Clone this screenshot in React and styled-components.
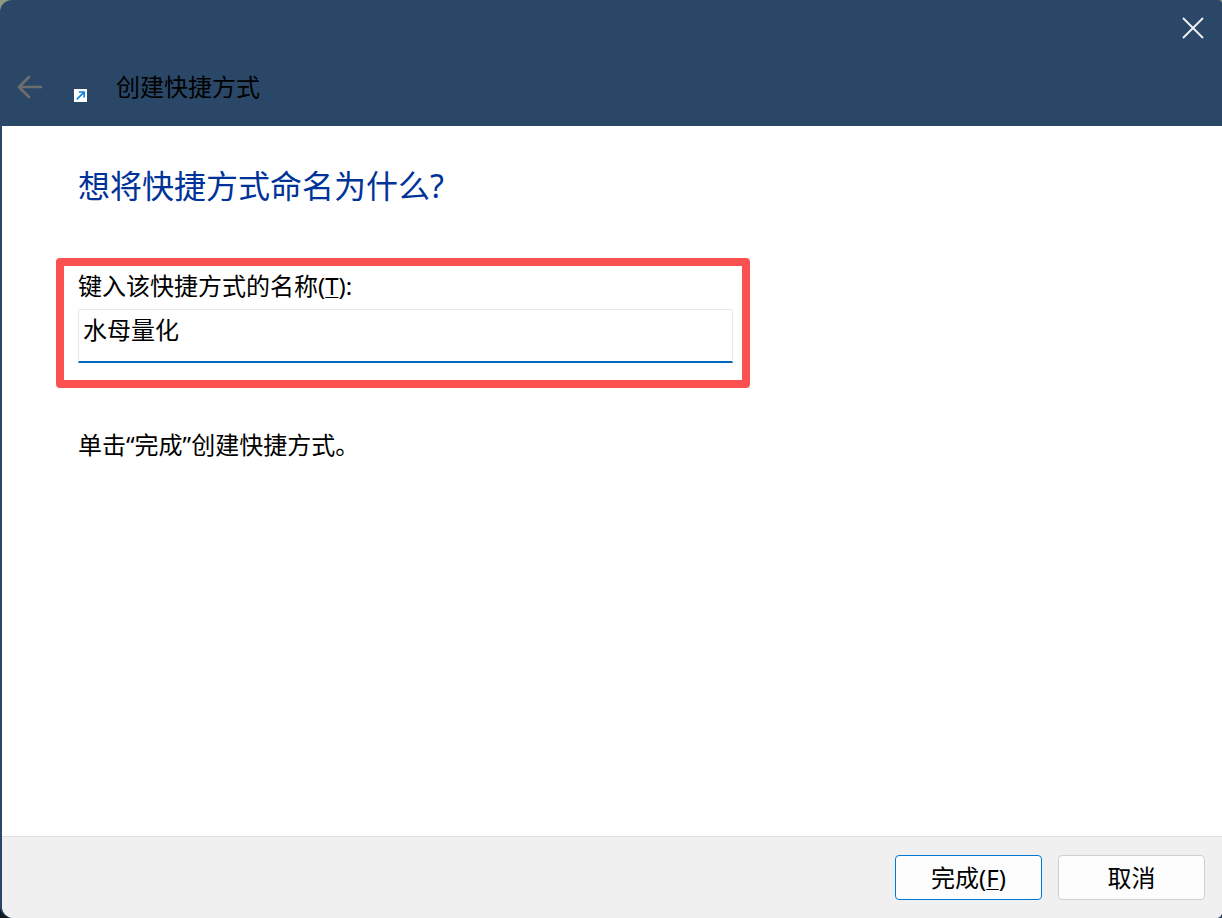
import React, { useState } from 'react';
import styled, { createGlobalStyle } from 'styled-components';

const App = () => {
  const [name, setName] = useState('水母量化');

  return (
    <>
      <GlobalStyle />
      <Desktop>
        <Wizard>
          <Header>
            <CloseButton type="button" aria-label="关闭">
              <svg width="22" height="22" viewBox="0 0 22 22" fill="none">
                <path d="M1 1 21 21M21 1 1 21" stroke="#f4f4f4" strokeWidth="1.8" />
              </svg>
            </CloseButton>
            <TitleRow>
              <BackButton type="button" aria-label="上一步" disabled>
                <svg width="26" height="24" viewBox="0 0 26 24" fill="none">
                  <path
                    d="M13 2 3 12l10 10M3 12h22"
                    stroke="#6d6d6d"
                    strokeWidth="2.7"
                    strokeLinecap="round"
                    strokeLinejoin="round"
                  />
                </svg>
              </BackButton>
              <ShortcutIcon viewBox="0 0 13 13">
                <rect width="13" height="13" fill="#fff" />
                <path
                  d="M2.8 10.4 10 3.2M4.8 3h5.400v5.400"
                  fill="none"
                  stroke="#1583d8"
                  strokeWidth="1.7"
                />
              </ShortcutIcon>
              <Title>创建快捷方式</Title>
            </TitleRow>
          </Header>
          <Panel>
            <Content>
              <Heading>想将快捷方式命名为什么?</Heading>
              <Highlight>
                <Label htmlFor="shortcut-name">
                  键入该快捷方式的名称(<u>T</u>):
                </Label>
                <NameInput
                  id="shortcut-name"
                  type="text"
                  accessKey="t"
                  value={name}
                  onChange={e => setName(e.target.value)}
                />
              </Highlight>
              <Hint>单击“完成”创建快捷方式。</Hint>
            </Content>
            <Footer>
              <Button type="button" accessKey="f" $primary>
                完成(<u>F</u>)
              </Button>
              <Button type="button">取消</Button>
            </Footer>
          </Panel>
        </Wizard>
      </Desktop>
    </>
  );
};

export default App;

const GlobalStyle = createGlobalStyle`
  * {
    box-sizing: border-box;
  }
  body {
    margin: 0;
  }
  body, button, input {
    font-family: 'Noto Sans', 'Noto Sans CJK SC', sans-serif;
    font-size: 24px;
    line-height: 32px;
    color: #000;
  }
  u {
    text-decoration-thickness: 1px;
    text-underline-offset: 2px;
  }
`;

const Desktop = styled.div`
  display: flex;
  min-height: 100vh;
  background: linear-gradient(#8f9a7c 50%, #14181c 50%);
`;

const Wizard = styled.main`
  flex: 1;
  display: flex;
  flex-direction: column;
  padding-left: 2px;
  border-radius: 12px 4px 0 12px;
  background-color: #2a4767;
`;

const Header = styled.header`
  display: flex;
  flex-direction: column;
  height: 126px;
`;

const CloseButton = styled.button`
  display: flex;
  align-items: center;
  justify-content: center;
  align-self: flex-end;
  width: 58px;
  height: 56px;
  padding: 0;
  border: 0;
  background: none;
`;

const TitleRow = styled.div`
  display: flex;
  align-items: center;
  height: 62px;
  padding-left: 14px;
`;

const BackButton = styled.button`
  display: flex;
  padding: 0;
  border: 0;
  background: none;
`;

const ShortcutIcon = styled.svg`
  width: 13px;
  height: 13px;
  margin: 16px 29px 0 32px;
`;

const Title = styled.h1`
  margin: 0;
  font-size: 24px;
  font-weight: 400;
`;

const Panel = styled.section`
  flex: 1;
  display: flex;
  flex-direction: column;
  overflow: hidden;
  border-radius: 0 0 6px 12px;
  background-color: #fff;
`;

const Content = styled.div`
  flex: 1;
  padding: 40px 54px;
`;

const Heading = styled.h2`
  margin: 0 22px 52px;
  color: #003399;
  font-size: 32px;
  font-weight: 400;
  line-height: 40px;
`;

const Highlight = styled.div`
  display: flex;
  flex-direction: column;
  max-width: 694px;
  padding: 4px 9px 17px 14px;
  border: 8px solid #fb5251;
  border-radius: 4px;
`;

const Label = styled.label`
  margin-bottom: 7px;
`;

const NameInput = styled.input`
  width: 100%;
  height: 54px;
  padding: 0 4px 14px;
  border: 1px solid #e5e8ea;
  border-bottom: 2px solid #0067c0;
  border-radius: 2px 2px 0 0;
  outline: 0;
  background-color: #fff;
`;

const Hint = styled.p`
  margin: 41px 22px 0;
`;

const Footer = styled.footer`
  display: flex;
  justify-content: flex-end;
  gap: 16px;
  padding: 18px 17px;
  border-top: 1px solid #dfdfdf;
  background-color: #f0f0f0;
`;

const Button = styled.button`
  width: 147px;
  height: 45px;
  padding: 0;
  border: 1px solid ${({ $primary }) => ($primary ? '#0078d4' : '#d0d0d0')};
  border-radius: 4px;
  background-color: #fdfdfd;
`;
